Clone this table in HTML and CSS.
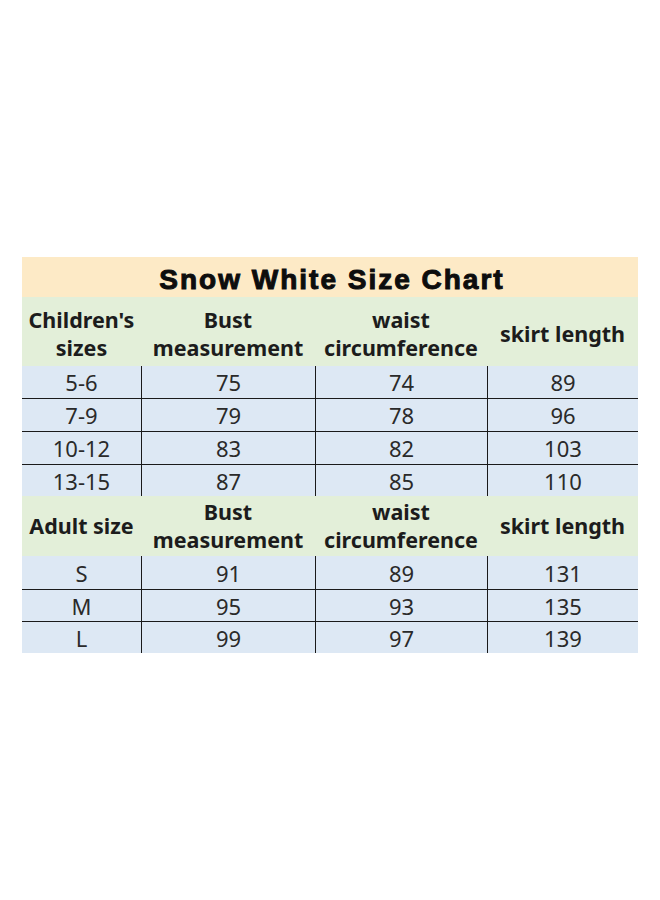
FILE: index.html
```html
<!DOCTYPE html>
<html>
<head>
<meta charset="utf-8">
<link rel="stylesheet" href="styles.css">
</head>
<body>
<div class="chart">
  <div class="title">Snow White Size Chart</div>
  <div class="head head1">
    <div class="hc">Children's<br>sizes</div>
    <div class="hc">Bust<br>measurement</div>
    <div class="hc">waist<br>circumference</div>
    <div class="hc">skirt length</div>
  </div>
  <div class="rows">
    <div class="row r32"><div class="c">5-6</div><div class="c">75</div><div class="c">74</div><div class="c">89</div></div>
    <div class="row r33"><div class="c">7-9</div><div class="c">79</div><div class="c">78</div><div class="c">96</div></div>
    <div class="row r33"><div class="c">10-12</div><div class="c">83</div><div class="c">82</div><div class="c">103</div></div>
    <div class="row r32"><div class="c">13-15</div><div class="c">87</div><div class="c">85</div><div class="c">110</div></div>
  </div>
  <div class="head head2">
    <div class="hc">Adult size</div>
    <div class="hc">Bust<br>measurement</div>
    <div class="hc">waist<br>circumference</div>
    <div class="hc">skirt length</div>
  </div>
  <div class="rows">
    <div class="row r33"><div class="c">S</div><div class="c">91</div><div class="c">89</div><div class="c">131</div></div>
    <div class="row r32"><div class="c">M</div><div class="c">95</div><div class="c">93</div><div class="c">135</div></div>
    <div class="row r32"><div class="c">L</div><div class="c">99</div><div class="c">97</div><div class="c">139</div></div>
  </div>
</div>
</body>
</html>
```

FILE: styles.css
```css
*, *::before, *::after {
  box-sizing: border-box;
}
html, body {
  margin: 0;
  padding: 0;
  background: #ffffff;
}
body {
  width: 660px;
  height: 900px;
  font-family: "Noto Sans", "Open Sans", sans-serif;
  color: #222222;
}
.chart {
  margin-left: 22px;
  padding-top: 257px;
  width: 616px;
}
.title {
  height: 40px;
  background: #fdeac6;
  font-family: "Liberation Sans", Arial, sans-serif;
  font-weight: 700;
  font-size: 28px;
  letter-spacing: 2px;
  color: #0d0d0d;
  display: flex;
  align-items: center;
  justify-content: center;
  padding-top: 5px;
  padding-left: 4px;
  -webkit-text-stroke: 1px #0d0d0d;
}
.head {
  display: grid;
  grid-template-columns: 119px 174px 172px 151px;
  background: #e3efd9;
  font-weight: 700;
  font-size: 21.5px;
  line-height: 28px;
  color: #1c1c1c;
}
.head1 { height: 69px; }
.head2 { height: 60px; }
.hc {
  display: flex;
  align-items: center;
  justify-content: center;
  text-align: center;
  white-space: nowrap;
}
.head1 .hc { padding-top: 4px; }
.rows {
  background: #dde8f4;
}
.row {
  display: grid;
  grid-template-columns: 119px 174px 172px 151px;
}
.row + .row {
  border-top: 1px solid #1a1a1a;
}
.r32 { height: 32px; }
.r33 { height: 33px; }
.c {
  display: flex;
  align-items: center;
  justify-content: center;
  font-size: 22px;
  color: #2a2a2a;
}
.c + .c {
  border-left: 1px solid #1a1a1a;
}
```
